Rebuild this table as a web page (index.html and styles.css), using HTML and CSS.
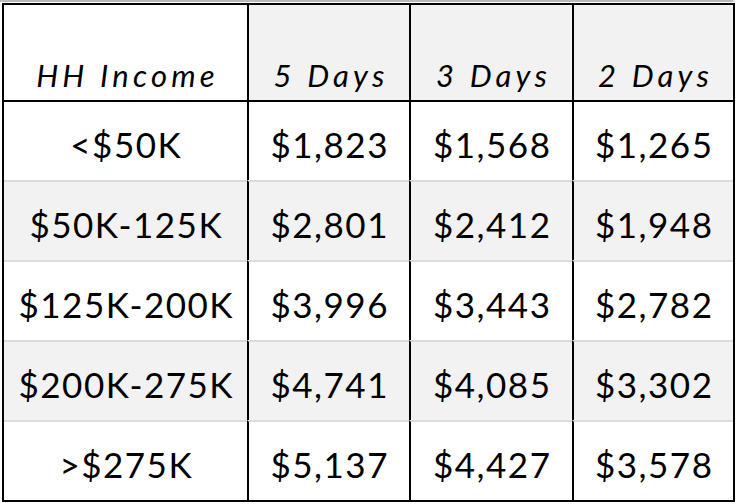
FILE: index.html
```html
<!DOCTYPE html>
<html lang="en">
<head>
<meta charset="utf-8">
<title>HH Income</title>
<link rel="stylesheet" href="styles.css">
</head>
<body>
<div class="page">
  <div class="top-rule"></div>
  <table class="grid">
    <colgroup>
      <col class="c-income">
      <col class="c-5">
      <col class="c-3">
      <col class="c-2">
    </colgroup>
    <thead>
      <tr>
        <th class="h-plain">HH Income</th>
        <th>5 Days</th>
        <th>3 Days</th>
        <th>2 Days</th>
      </tr>
    </thead>
    <tbody>
      <tr><td>&lt;$50K</td><td>$1,823</td><td>$1,568</td><td>$1,265</td></tr>
      <tr class="alt"><td>$50K-125K</td><td>$2,801</td><td>$2,412</td><td>$1,948</td></tr>
      <tr><td>$125K-200K</td><td>$3,996</td><td>$3,443</td><td>$2,782</td></tr>
      <tr class="alt"><td>$200K-275K</td><td>$4,741</td><td>$4,085</td><td>$3,302</td></tr>
      <tr><td>&gt;$275K</td><td>$5,137</td><td>$4,427</td><td>$3,578</td></tr>
    </tbody>
  </table>
</div>
</body>
</html>
```

FILE: styles.css
```css
html, body {
  margin: 0;
  padding: 0;
  background: #ffffff;
}

.page {
  width: 740px;
  height: 504px;
  overflow: hidden;
  font-family: "Lato", "Noto Sans", sans-serif;
  color: #000;
}

.top-rule {
  width: 735px;
  height: 2px;
  background: linear-gradient(to right, #b9b9b9 0, #b9b9b9 733px, #e2e2e2 733px);
  margin-bottom: 1px;
}

.grid {
  margin-left: 2px;
  width: 733px;
  table-layout: fixed;
  border-collapse: separate;
  border-spacing: 0;
  border: 2px solid #000;
}

.c-income { width: 243px; }
.c-5 { width: 162px; }
.c-3 { width: 163px; }
.c-2 { width: 161px; }

.grid th,
.grid td {
  box-sizing: border-box;
  text-align: center;
  white-space: nowrap;
}

.grid th + th,
.grid td + td {
  border-left: 2px solid #000;
}

.grid th {
  height: 97px;
  font-style: italic;
  font-weight: 400;
  font-size: 31px;
  line-height: 30px;
  letter-spacing: 4.2px;
  vertical-align: bottom;
  padding: 0 0 10px 4px;
  background: #f2f2f2;
  border-bottom: 2px solid #000;
}

.grid th.h-plain {
  background: #ffffff;
}

.grid td {
  height: 80px;
  font-size: 35px;
  line-height: 40px;
  letter-spacing: 1.5px;
  vertical-align: middle;
  padding: 6px 0 0 1.5px;
  border-top: 2px solid #dcdcdc;
}

.grid tbody tr:first-child td {
  border-top: none;
  height: 78px;
}

.grid tr.alt td {
  background: #f2f2f2;
}
```
